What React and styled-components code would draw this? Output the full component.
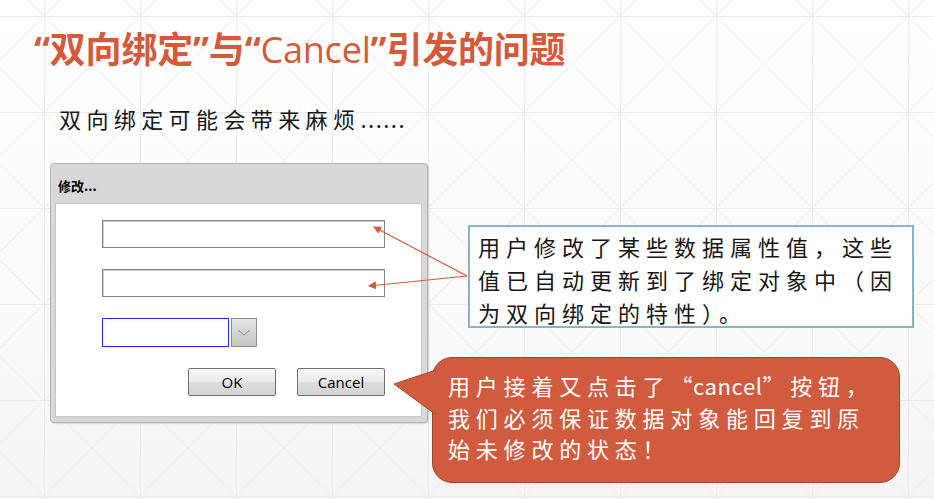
import React from 'react';
import styled, { createGlobalStyle } from 'styled-components';

const GlobalStyle = createGlobalStyle`
  html, body {
    margin: 0;
    padding: 0;
    background: #fff;
  }
  body {
    font-family: "Noto Sans CJK SC", "Noto Sans", sans-serif;
  }
`;

const Slide = styled.div`
  position: relative;
  width: 934px;
  height: 499px;
  overflow: hidden;
  background: linear-gradient(180deg, #ffffff 0%, #fbfbfb 50%, #f4f4f4 100%);
`;

const Backdrop = styled.svg`
  position: absolute;
  inset: 0;
  z-index: 0;
`;

const Content = styled.div`
  position: relative;
  z-index: 1;
`;

const Title = styled.h1`
  margin: 0;
  padding: 28px 0 0 34px;
  font-family: "Open Sans", "Noto Sans CJK SC", sans-serif;
  font-size: 36px;
  line-height: 44px;
  font-weight: 700;
  color: #d45a3a;
  letter-spacing: -0.2px;

  & span {
    font-weight: 500;
  }
`;

const Lead = styled.p`
  margin: 31px 0 0 59px;
  font-family: "Noto Sans CJK SC", serif;
  font-size: 22px;
  line-height: 30px;
  letter-spacing: 5.4px;
  color: #161616;

  & span {
    letter-spacing: 1.5px;
  }
`;

const Row = styled.div`
  display: flex;
  margin-top: 30px;
`;

const Dialog = styled.div`
  display: flex;
  flex-direction: column;
  box-sizing: border-box;
  width: 378px;
  height: 260px;
  margin-left: 50px;
  background: #d8d8d8;
  border: 1px solid #b3b3b3;
  border-radius: 4px;
  box-shadow: 1px 1px 1px rgba(0, 0, 0, 0.12);
`;

const DialogTitle = styled.div`
  display: flex;
  align-items: center;
  box-sizing: border-box;
  height: 39px;
  padding: 4px 0 0 7px;
  font-size: 13px;
  font-weight: 700;
  color: #000;
`;

const Panel = styled.div`
  flex: 1;
  display: flex;
  flex-direction: column;
  gap: 21px;
  margin: 0 5px 5px 4px;
  padding: 16px 36px 0 46px;
  background: #fff;
  border: 1px solid #c4c4c4;
`;

const TextBox = styled.div`
  box-sizing: border-box;
  width: ${p => p.w || 283}px;
  height: ${p => p.h || 28}px;
  background: #fff;
  border: 1px solid ${p => (p.focused ? '#2a2aff' : '#858585')};
  box-shadow: ${p => (p.focused ? 'none' : 'inset 1px 1px 0 #cfcfcf')};
`;

const Combo = styled.div`
  display: flex;
  gap: 2px;
`;

const DropButton = styled.div`
  display: flex;
  align-items: center;
  justify-content: center;
  box-sizing: border-box;
  width: 26px;
  height: 29px;
  border: 1px solid #8d8d8d;
  background: linear-gradient(180deg, #e6e6e6 0%, #d2d2d2 55%, #c6c6c6 100%);
`;

const Buttons = styled.div`
  display: flex;
  justify-content: flex-end;
  gap: 21px;
`;

const Button = styled.div`
  display: flex;
  align-items: center;
  justify-content: center;
  box-sizing: border-box;
  width: 88px;
  height: 28px;
  border: 1px solid #707070;
  border-radius: 2px;
  background: linear-gradient(180deg, #f6f6f6 0%, #ebebeb 48%, #dddddd 52%, #d3d3d3 100%);
  font-family: "Open Sans", "Liberation Sans", sans-serif;
  font-size: 15px;
  color: #000;
`;

const Notes = styled.div`
  display: flex;
  flex-direction: column;
  margin-left: 4px;
`;

const InfoBox = styled.div`
  box-sizing: border-box;
  width: 446px;
  height: 103px;
  margin: 62px 0 0 36px;
  padding: 3px 0 0 8px;
  background: #fff;
  border: 2px solid #86b6c4;
  font-size: 22px;
  line-height: 33px;
  letter-spacing: 6px;
  color: #161616;
`;

const Callout = styled.div`
  position: relative;
  box-sizing: border-box;
  width: 468px;
  height: 126px;
  margin-top: 29px;
  padding: 12px 0 0 15px;
  background: #d15b3f;
  border: 1px solid #a9442c;
  border-radius: 20px;
  font-size: 22px;
  line-height: 31.5px;
  letter-spacing: 5.8px;
  color: #fff;
  white-space: nowrap;
`;

const Latin = styled.span`
  letter-spacing: 0.6px;
  margin-right: 5px;
`;

const Tail = styled.svg`
  position: absolute;
  left: -39px;
  top: 11px;
  overflow: visible;
`;

const Arrows = styled.svg`
  position: absolute;
  inset: 0;
  z-index: 2;
  pointer-events: none;
`;

const GridPattern = () => (
  <Backdrop width="934" height="499">
    <defs>
      <pattern id="cells" x="44" y="16" width="96" height="96" patternUnits="userSpaceOnUse">
        <path d="M0 0 L96 96 M96 0 L0 96" stroke="#efefef" strokeWidth="1.2" fill="none" />
        <path d="M0.5 0 V96 M0 0.5 H96" stroke="#ebebeb" strokeWidth="1.2" fill="none" />
      </pattern>
    </defs>
    <rect width="934" height="499" fill="url(#cells)" />
  </Backdrop>
);

const App = () => (
  <Slide>
    <GlobalStyle />
    <GridPattern />
    <Content>
      <Title>
        “双向绑定”与“<span>Cancel</span>”引发的问题
      </Title>
      <Lead>
        双向绑定可能会带来麻烦<span>......</span>
      </Lead>
      <Row>
        <Dialog>
          <DialogTitle>修改...</DialogTitle>
          <Panel>
            <TextBox />
            <TextBox />
            <Combo>
              <TextBox w={127} h={29} focused />
              <DropButton>
                <svg width="14" height="8" viewBox="0 0 14 8">
                  <path d="M1 1 L7 6 L13 1" stroke="#8a8a8a" strokeWidth="1" fill="none" />
                </svg>
              </DropButton>
            </Combo>
            <Buttons>
              <Button>OK</Button>
              <Button>Cancel</Button>
            </Buttons>
          </Panel>
        </Dialog>
        <Notes>
          <InfoBox>
            用户修改了某些数据属性值，这些值已自动更新到了绑定对象中（因为双向绑定的特性）。
          </InfoBox>
          <Callout>
            <Tail width="42" height="46">
              <path d="M42 1 L0 15 L41 45" fill="#d15b3f" stroke="#a9442c" strokeWidth="1" />
              <rect x="39" y="2" width="4" height="42" fill="#d15b3f" />
            </Tail>
            用户接着又点击了<Latin>“cancel”</Latin>按钮，
            <br />
            我们必须保证数据对象能回复到原
            <br />
            始未修改的状态！
          </Callout>
        </Notes>
      </Row>
    </Content>
    <Arrows width="934" height="499">
      <defs>
        <marker id="head" markerWidth="8" markerHeight="8" refX="7" refY="4" orient="auto" markerUnits="userSpaceOnUse">
          <path d="M0 0 L8 4 L0 8 Z" fill="#d45a3a" />
        </marker>
      </defs>
      <line x1="467" y1="276" x2="374" y2="227" stroke="#d45a3a" strokeWidth="1.2" markerEnd="url(#head)" />
      <line x1="467" y1="276" x2="369" y2="286" stroke="#d45a3a" strokeWidth="1.2" markerEnd="url(#head)" />
    </Arrows>
  </Slide>
);

export default App;
